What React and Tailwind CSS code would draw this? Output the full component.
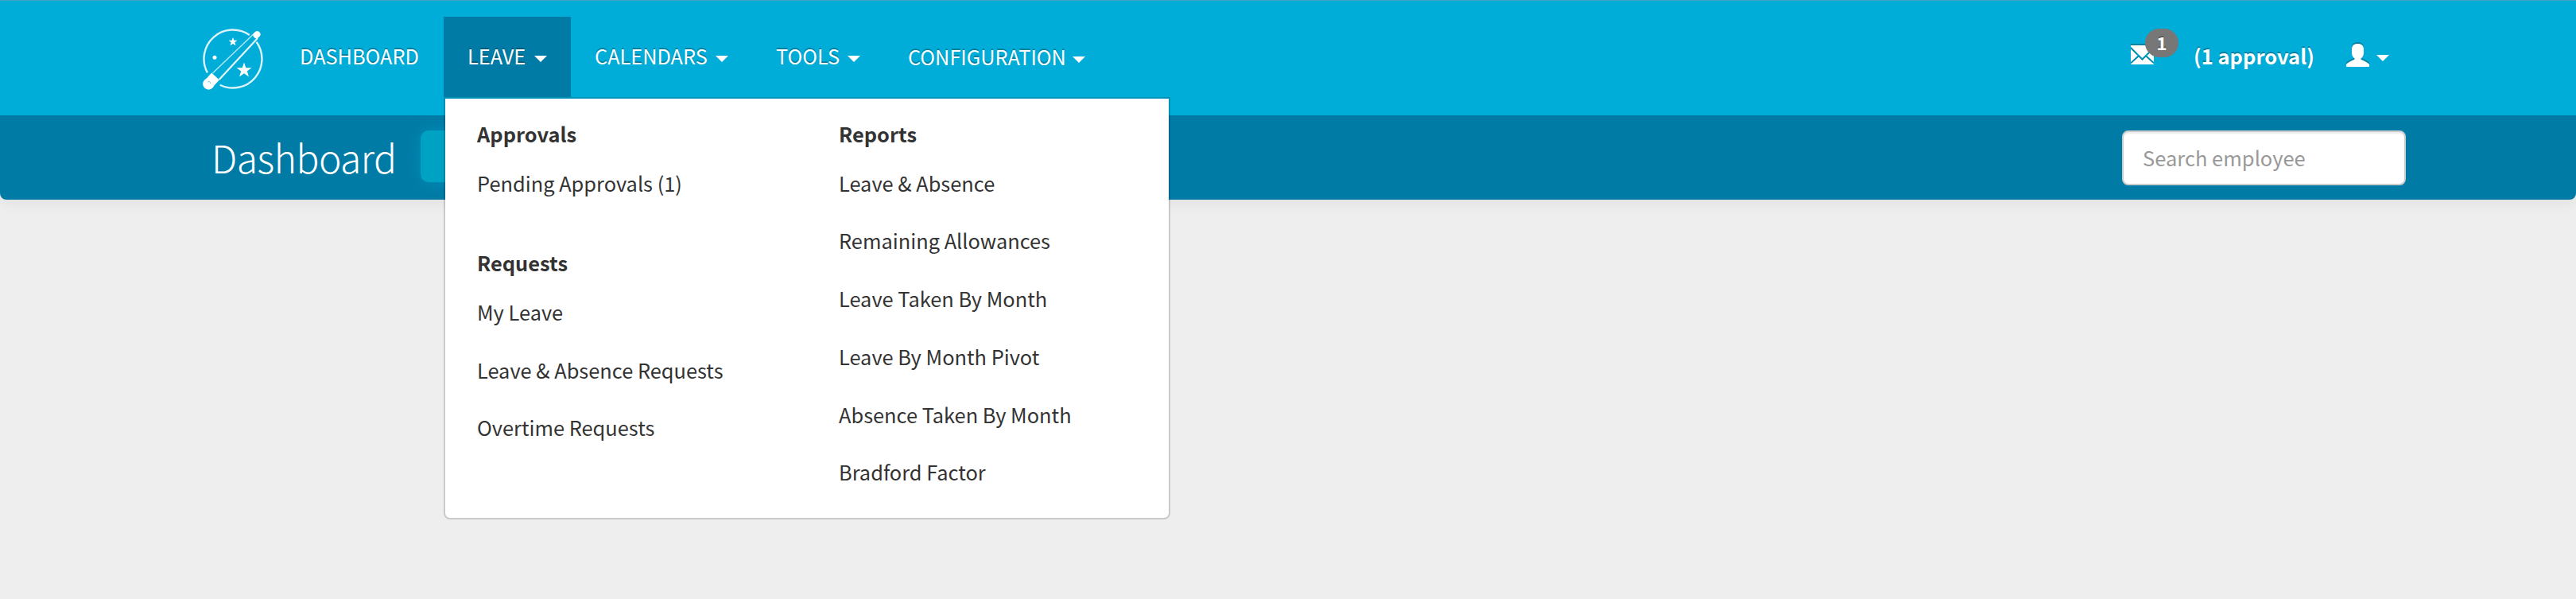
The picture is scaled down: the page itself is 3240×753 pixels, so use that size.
import React from 'react'

const navItems = [
  { label: 'DASHBOARD', width: 'w-[211px]' },
  { label: 'LEAVE', width: 'w-[160px]', caret: true, active: true },
  { label: 'CALENDARS', width: 'w-[228px]', caret: true },
  { label: 'TOOLS', width: 'w-[166px]', caret: true },
  { label: 'CONFIGURATION', width: 'w-[283px] pt-px', caret: true },
]

const leaveMenu = [
  [
    { title: 'Approvals', links: ['Pending Approvals (1)'] },
    { title: 'Requests', links: ['My Leave', 'Leave & Absence Requests', 'Overtime Requests'] },
  ],
  [
    {
      title: 'Reports',
      links: [
        'Leave & Absence',
        'Remaining Allowances',
        'Leave Taken By Month',
        'Leave By Month Pivot',
        'Absence Taken By Month',
        'Bradford Factor',
      ],
    },
  ],
]

const Caret = () => (
  <svg className="mt-1.5 h-2 w-4 shrink-0" viewBox="0 0 16 8" fill="white">
    <path d="M0 0h16L8 8z" />
  </svg>
)

const Logo = () => (
  <svg className="h-[78px] w-[78px]" viewBox="0 0 78 78" fill="none" stroke="white">
    <path d="M7.900 55.400A36.500 36.500 0 0 1 60.800 8" strokeWidth="2.400" opacity="0.85" />
    <path d="M69.600 16.700A36.500 36.500 0 0 1 23.700 70.700" strokeWidth="2.400" opacity="0.85" />
    <path d="M14.700 55.700L67 5.700" strokeWidth="1.500" opacity="0.7" />
    <path d="M22.700 64L71 12" strokeWidth="2.200" opacity="0.9" />
    <path d="M69.500 8.200L70.500 7.200" strokeWidth="8" strokeLinecap="round" />
    <circle cx="9.300" cy="69.500" r="7.200" fill="white" stroke="none" />
    <path d="M9.300 69.500L18 60" strokeWidth="13" />
    <path d="M8.500 67q3-1.500 3 2" stroke="#00acd8" strokeWidth="1" opacity="0.6" />
    <g fill="white" stroke="none">
      <path d="M40 11l1.500 3.800h4l-3.200 2.500 1.200 4L40 19l-3.500 2.300 1.200-4-3.200-2.500h4z" />
      <path d="M54 42.500l2.300 6.700h7.200l-5.700 4.300 2.200 7-6-4.200-6 4.200 2.200-7-5.700-4.300h7.200z" />
      <circle cx="17" cy="36.300" r="2.500" />
    </g>
  </svg>
)

const EnvelopeIcon = () => (
  <svg
    className="h-6 w-[29px] drop-shadow-[0_-2px_0_rgba(0,0,0,0.25)]"
    viewBox="0 0 29 24"
    fill="white"
  >
    <path d="M0 0h29v1.500L14.500 16 0 1.500z" />
    <path d="M0 4.500l8.500 8.500L0 21z" />
    <path d="M29 4.500L20.500 13l8.500 8z" />
    <path d="M0 24v-.5l10-9 4.500 4.500 4.500-4.500 10 9v.5z" />
  </svg>
)

const UserIcon = () => (
  <svg
    className="h-[29px] w-[29px] drop-shadow-[0_-2px_0_rgba(0,0,0,0.25)]"
    viewBox="0 0 29 29"
    fill="white"
  >
    <path d="M14.500 0C19.500 0 22 2.500 22 7v4.500c0 3-1.500 5.500-3.500 7v1.200c4 1.800 8 3.300 10.500 6V29H0v-3.300c2.500-2.700 6.500-4.200 10.500-6v-1.200c-2-1.500-3.500-4-3.500-7V7c0-4.500 2.500-7 7.500-7z" />
  </svg>
)

const MegaMenu = () => (
  <div className="absolute left-0 top-[101px] z-10 grid h-[531px] w-[914px] grid-cols-2 rounded-b-lg border-2 border-black/15 bg-white bg-clip-padding pt-[19px] text-[25.4px] text-[#333] text-shadow-none">
    {leaveMenu.map((column, i) => (
      <div key={i} className="pl-10">
        {column.map((group) => (
          <div key={group.title} className="mb-[39px]">
            <h4 className="h-[50.500px] font-bold leading-[51px]">{group.title}</h4>
            {group.links.map((link) => (
              <a key={link} className="block h-[72.800px] whitespace-nowrap leading-[72.800px]">
                {link}
              </a>
            ))}
          </div>
        ))}
      </div>
    ))}
  </div>
)

const NavItem = ({ item }) => (
  <li className={`relative h-[101px] ${item.width} ${item.active ? 'bg-[#007ba5]' : ''}`}>
    <a className="flex h-full items-center justify-between px-[30px] pb-px">
      <span className="whitespace-nowrap">{item.label}</span>
      {item.caret && <Caret />}
    </a>
    {item.active && <MegaMenu />}
  </li>
)

const App = () => {
  return (
    <div className="h-screen overflow-hidden bg-[#eee] font-['Noto_Sans_CJK_SC','Source_Sans_Pro',sans-serif]">
      <header className="rounded-b-lg shadow-[0_2px_20px_rgba(0,0,0,0.075)]">
        <nav className="flex h-[145px] items-start justify-between border-t border-[#40a5be] bg-[#00acd8] pl-[253px] pr-[235px] pt-5 text-[25.3px] text-white text-shadow-[0_-2px_0_rgba(0,0,0,0.25)]">
          <div className="flex">
            <div className="w-[94px] pt-[15px]">
              <Logo />
            </div>
            <ul className="flex">
              {navItems.map((item) => (
                <NavItem key={item.label} item={item} />
              ))}
            </ul>
          </div>

          <div className="flex h-[96px] items-center">
            <div className="relative mr-[50px]">
              <EnvelopeIcon />
              <span className="absolute -top-[21px] left-[18px] h-9 w-[42px] rounded-[18px] bg-[#777] text-center text-[22px] font-bold leading-[35px]">
                1
              </span>
            </div>
            <strong className="mt-[3px] w-[192px] whitespace-nowrap text-[25.5px]">(1 approval)</strong>
            <UserIcon />
            <span className="ml-[9px] pt-0.5">
              <Caret />
            </span>
          </div>
        </nav>

        {/* Page title bar */}
        <div className="flex h-[106px] items-center justify-between rounded-b-lg bg-[#007ba5] pl-[266px] pr-[214px]">
          <div className="flex items-center">
            <h1 className="w-[263px] whitespace-nowrap pb-[3px] text-[48px] font-light leading-[70px] tracking-[-0.5px] text-white">
              Dashboard
            </h1>
            <button className="mb-[3px] h-[65px] w-[120px] rounded-[10px] bg-[#00a2c4] shadow-[0_0_20px_rgba(0,172,216,0.4)]" />
          </div>
          <input
            type="text"
            placeholder="Search employee"
            className="mt-px h-[69px] w-[357px] rounded-lg border-2 border-[#ccc] bg-white px-[24px] pb-[3px] text-[25.5px] shadow-[inset_0_2px_2px_rgba(0,0,0,0.075)] placeholder:text-[#999]"
          />
        </div>
      </header>
    </div>
  )
}

export default App
